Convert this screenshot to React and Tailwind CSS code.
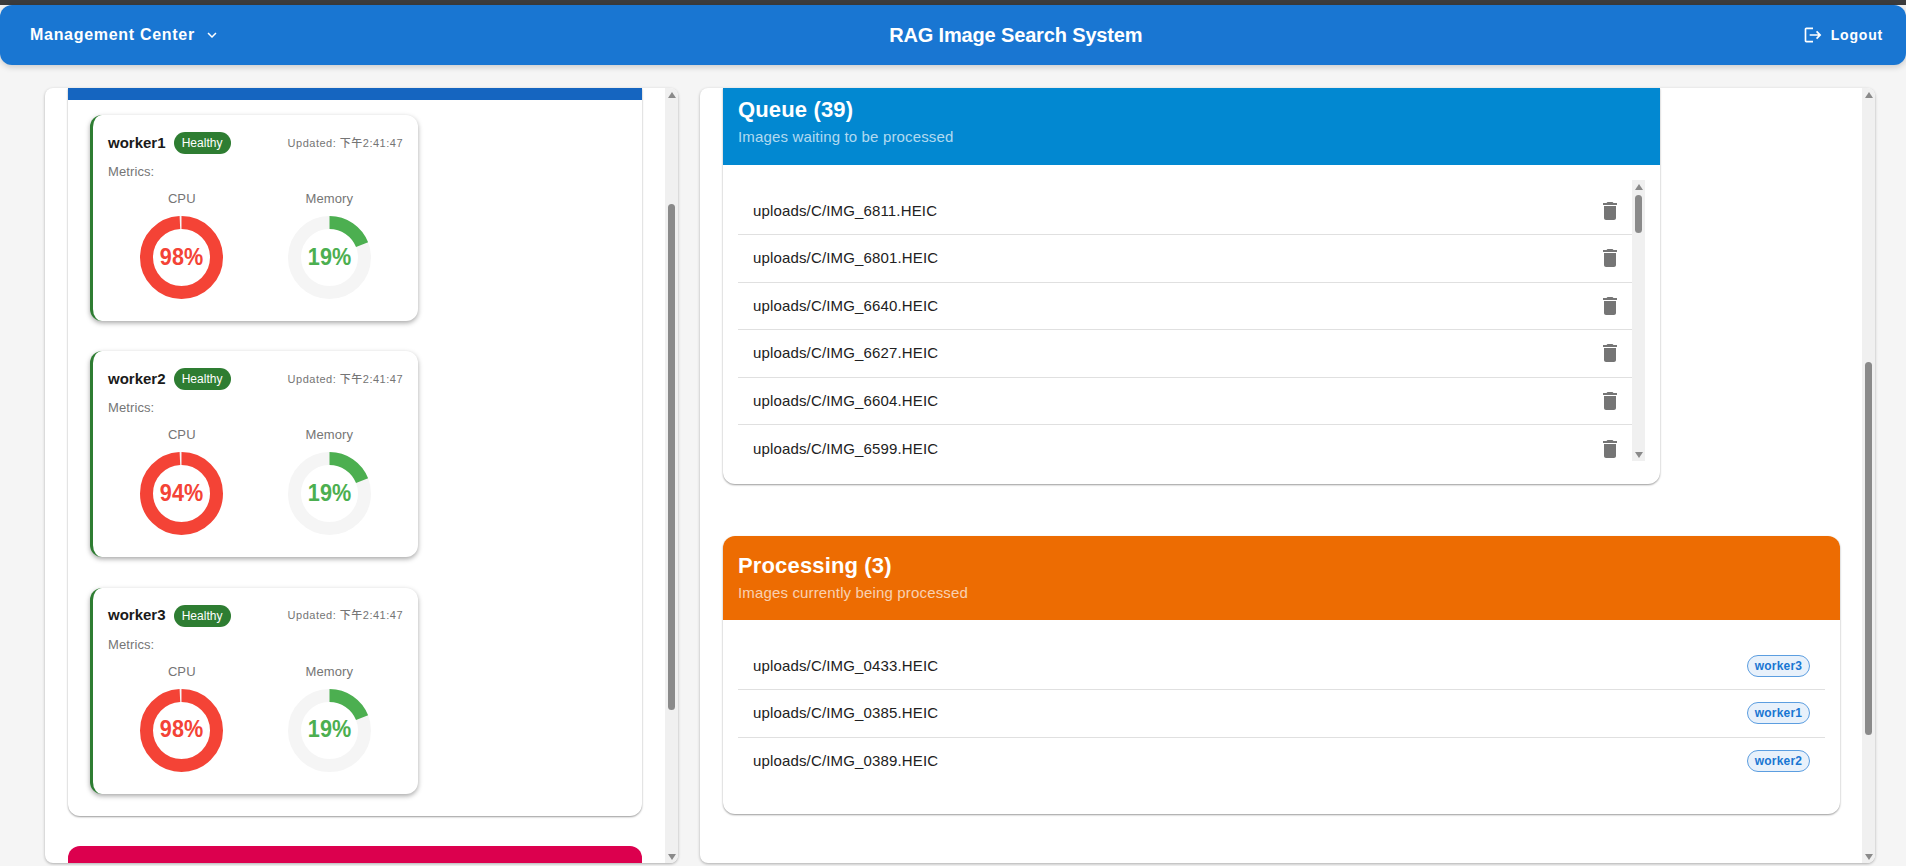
import React from "react";

const queueFiles = ["IMG_6811", "IMG_6801", "IMG_6640", "IMG_6627", "IMG_6604", "IMG_6599"];
const processingFiles = [
    { name: "IMG_0433", worker: "worker3" },
    { name: "IMG_0385", worker: "worker1" },
    { name: "IMG_0389", worker: "worker2" },
];
const workers = [
    { name: "worker1", cpu: 98, memory: 19 },
    { name: "worker2", cpu: 94, memory: 19 },
    { name: "worker3", cpu: 98, memory: 19 },
];

const Scrollbar = ({ thumbClass }) => (
    <div className="w-[13px] shrink-0 bg-[#f0f0f0] flex flex-col items-center pt-[4px] pb-[3px]">
        <div className="w-0 h-0 border-x-[4.5px] border-x-transparent border-b-[6px] border-b-[#8a8a8a]" />
        <div className={`w-[7px] rounded-full bg-[#8a8a8a] ${thumbClass}`} />
        <div className="mt-auto w-0 h-0 border-x-[4.5px] border-x-transparent border-t-[6px] border-t-[#8a8a8a]" />
    </div>
);

const Gauge = ({ label, value, color, closed }) => {
    const radius = 35;
    const circumference = 2 * Math.PI * radius;
    const arc = closed ? circumference - 2 : (circumference * value) / 100;
    return (
        <div className="w-[148px] flex flex-col items-center">
            <div className="h-[20px] leading-[20px] text-[13px] tracking-[0.1px] text-[#757575]">{label}</div>
            <div className="relative mt-[7px] w-[83px] h-[83px]">
                <svg viewBox="0 0 83 83" className="w-[83px] h-[83px] block">
                    <circle cx="41.5" cy="41.5" r={radius} fill="none" stroke="#f5f5f5" strokeWidth="13" />
                    <circle
                        cx="41.5"
                        cy="41.5"
                        r={radius}
                        fill="none"
                        stroke={color}
                        strokeWidth="13"
                        strokeDasharray={`${arc} ${circumference}`}
                        transform="rotate(-90 41.5 41.5)"
                    />
                </svg>
                <div className="absolute inset-0 flex items-center justify-center pb-[2px] text-[24px] font-bold scale-x-[0.9]" style={{ color }}>
                    {value}%
                </div>
            </div>
        </div>
    );
};

const WorkerCard = ({ worker }) => (
    <div className="w-[328px] h-[206px] mb-[30.3px] bg-white rounded-xl border-l-[3px] border-[#2e7d32] shadow-[0_2px_5px_rgba(0,0,0,0.35)] pl-[15px] pr-[15px] pt-[17px]">
        <div className="flex items-center h-[22px]">
            <span className="text-[15px] font-bold text-[#1a1a1a]">{worker.name}</span>
            <span className="ml-[8px] h-[22px] w-[57px] rounded-full bg-[#2e7d32] text-white text-[12px] flex items-center justify-center">
                Healthy
            </span>
            <span className="ml-auto text-[11px] font-medium tracking-[0.5px] text-[#757575]">Updated: 下午2:41:47</span>
        </div>
        <div className="mt-[8px] h-[20px] leading-[20px] text-[13px] tracking-[0.1px] text-[#757575]">Metrics:</div>
        <div className="flex mt-[7px]">
            <Gauge label="CPU" value={worker.cpu} color="#f44336" closed />
            <Gauge label="Memory" value={worker.memory} color="#4caf50" />
        </div>
    </div>
);

const TrashIcon = () => (
    <svg viewBox="0 0 24 24" className="w-[24px] h-[24px] fill-[#757575]">
        <path d="M6 19c0 1.1.9 2 2 2h8c1.1 0 2-.9 2-2V7H6v12zM19 4h-3.5l-1-1h-5l-1 1H5v2h14V4z" />
    </svg>
);

const CardHeader = ({ title, subtitle, className }) => (
    <div className={`px-[15px] text-white ${className}`}>
        <div className="text-[22px] font-bold leading-[28px] tracking-[0.15px]">{title}</div>
        <div className="text-[15px] leading-[20px] tracking-[0.15px] text-white/70 mt-[3px]">{subtitle}</div>
    </div>
);

export default function App() {
    return (
        <div className="h-screen flex flex-col overflow-hidden bg-[#f5f5f5] font-['Liberation_Sans','Noto_Sans_CJK_TC',sans-serif]">
            <div className="h-[5px] shrink-0 bg-[#3c3c3c]" />

            {/* Top bar */}
            <header className="h-[60px] shrink-0 flex items-center justify-between pl-[30px] pr-[23px] rounded-xl bg-[#1976d2] text-white shadow-[0_2px_6px_rgba(0,0,0,0.18)]">
                <div className="flex items-center text-[16px] font-bold tracking-[0.7px]">
                    Management Center
                    <svg viewBox="0 0 24 24" className="w-[18px] h-[18px] ml-[8px] fill-white">
                        <path d="M16.59 8.59 12 13.17 7.41 8.59 6 10l6 6 6-6z" />
                    </svg>
                </div>
                <div className="ml-[8px] text-[20px] font-bold tracking-[-0.15px]">RAG Image Search System</div>
                <div className="flex items-center text-[14px] font-bold tracking-[0.8px]">
                    <svg viewBox="0 0 24 24" className="w-[20px] h-[20px] mr-[8px] fill-white">
                        <path d="m17 7-1.41 1.41L18.17 11H8v2h10.17l-2.58 2.58L17 17l5-5zM4 5h8V3H4c-1.1 0-2 .9-2 2v14c0 1.1.9 2 2 2h8v-2H4V5z" />
                    </svg>
                    Logout
                </div>
            </header>

            <main className="flex gap-[22px] pl-[45px] pt-[23px]">
                {/* Workers panel */}
                <section className="w-[633px] h-[775px] flex overflow-hidden rounded-lg bg-white shadow-[0_1px_3px_rgba(0,0,0,0.3)]">
                    <div className="flex-1 pl-[23px] min-w-0">
                        <div className="w-[574px] h-[728px] rounded-b-xl bg-white shadow-[0_1px_2px_rgba(0,0,0,0.4)]">
                            <div className="h-[12px] bg-[#1565c0]" />
                            <div className="pl-[22px] pt-[15px]">
                                {workers.map((worker) => (
                                    <WorkerCard key={worker.name} worker={worker} />
                                ))}
                            </div>
                        </div>
                        <div className="w-[574px] h-[40px] mt-[30px] rounded-t-xl bg-[#dc004e]" />
                    </div>
                    <Scrollbar thumbClass="mt-[106px] h-[506px]" />
                </section>

                {/* Queue and processing panel */}
                <section className="w-[1175px] h-[775px] flex overflow-hidden rounded-lg bg-white shadow-[0_1px_3px_rgba(0,0,0,0.3)]">
                    <div className="flex-1 pl-[23px] min-w-0">
                        <div className="w-[937px] h-[396px] rounded-b-xl bg-white shadow-[0_1px_2px_rgba(0,0,0,0.4)]">
                            <CardHeader title="Queue (39)" subtitle="Images waiting to be processed" className="h-[77px] pt-[8px] bg-[#0288d1]" />
                            <div className="flex h-[281px] mt-[15px] ml-[15px] mr-[15px]">
                                <ul className="flex-1 pt-[7.5px] overflow-hidden">
                                    {queueFiles.map((file, i) => (
                                        <li
                                            key={file}
                                            className={`h-[47.5px] flex items-center justify-between pl-[15px] pr-[10px] text-[15px] tracking-[0.15px] text-[#212121] ${i < 5 ? "border-b border-[#e0e0e0]" : ""}`}
                                        >
                                            uploads/C/{file}.HEIC
                                            <TrashIcon />
                                        </li>
                                    ))}
                                </ul>
                                <Scrollbar thumbClass="mt-[5px] h-[38px]" />
                            </div>
                        </div>

                        <div className="w-[1117px] h-[278px] mt-[52px] rounded-xl bg-white shadow-[0_1px_2px_rgba(0,0,0,0.4)]">
                            <CardHeader title="Processing (3)" subtitle="Images currently being processed" className="h-[84px] pt-[16px] rounded-t-xl bg-[#ed6c02]" />
                            <ul className="pt-[22.5px] mx-[15px]">
                                {processingFiles.map((file, i) => (
                                    <li
                                        key={file.name}
                                        className={`h-[47.5px] flex items-center justify-between pl-[15px] pr-[15px] text-[15px] tracking-[0.15px] text-[#212121] ${i < 2 ? "border-b border-[#e0e0e0]" : ""}`}
                                    >
                                        uploads/C/{file.name}.HEIC
                                        <span className="w-[63px] h-[22px] rounded-full border border-[#5c9ee0] bg-[#e8f1fb] text-[#1976d2] text-[12px] tracking-[0.2px] font-bold flex items-center justify-center">
                                            {file.worker}
                                        </span>
                                    </li>
                                ))}
                            </ul>
                        </div>
                    </div>
                    <Scrollbar thumbClass="mt-[264px] h-[373px]" />
                </section>
            </main>
        </div>
    );
}
